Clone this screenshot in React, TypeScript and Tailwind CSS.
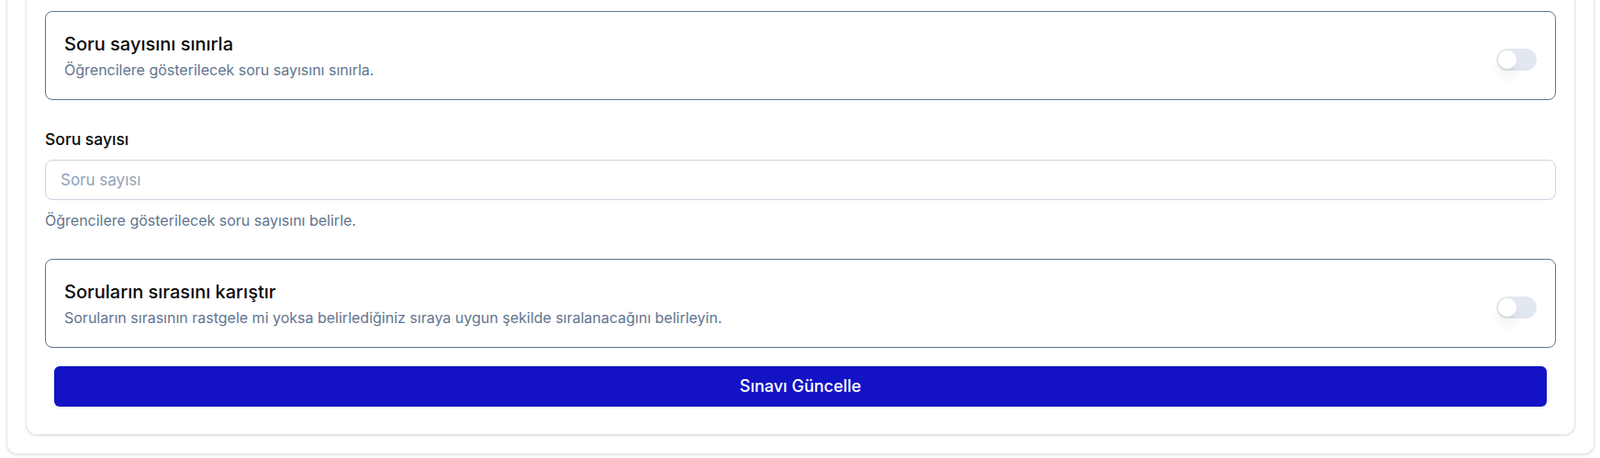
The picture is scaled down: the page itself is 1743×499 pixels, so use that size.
import React, { useState } from 'react';

function Toggle({ checked, onChange }: { checked: boolean; onChange: (v: boolean) => void }) {
  return (
    <button
      type="button"
      role="switch"
      aria-checked={checked}
      onClick={() => onChange(!checked)}
      className={`mt-2 inline-flex h-6 w-11 shrink-0 items-center rounded-full border-2 border-transparent transition-colors ${
        checked ? 'bg-[#1313c5]' : 'bg-slate-200'
      }`}
    >
      <span
        className={`block h-5 w-5 rounded-full bg-white shadow-lg ring-0 transition-transform ${
          checked ? 'translate-x-5' : 'translate-x-0'
        }`}
      />
    </button>
  );
}

function SwitchCard({
  title,
  description,
  checked,
  onChange
}: {
  title: string;
  description: string;
  checked: boolean;
  onChange: (v: boolean) => void;
}) {
  return (
    <div className="flex items-center justify-between rounded-lg border border-slate-500 px-5 pt-[21px] pb-5">
      <div>
        <h3 className="text-xl leading-7 font-medium text-[#0a0a0a]">{title}</h3>
        <p className="mt-0.5 text-base leading-6 text-slate-500">{description}</p>
      </div>
      <Toggle checked={checked} onChange={onChange} />
    </div>
  );
}

export default function App() {
  const [limitQuestions, setLimitQuestions] = useState(false);
  const [shuffle, setShuffle] = useState(false);
  const [count, setCount] = useState('');

  return (
    <div className="min-h-screen bg-white pl-[7px] pr-[6px] pb-1 font-['Inter',sans-serif]">
      {/* Dış kart */}
      <div className="rounded-b-xl border border-t-0 border-slate-200 px-5 pb-5 shadow-sm">
        {/* İç kart */}
        <div className="rounded-b-xl border border-t-0 border-slate-200 px-5 pt-3 pb-5 shadow-sm">
          <SwitchCard
            title="Soru sayısını sınırla"
            description="Öğrencilere gösterilecek soru sayısını sınırla."
            checked={limitQuestions}
            onChange={setLimitQuestions}
          />

          {/* Soru sayısı */}
          <div className="mt-[31px]">
            <label className="block text-[17.5px] leading-6 font-medium text-[#0a0a0a]">Soru sayısı</label>
            <input
              type="number"
              value={count}
              onChange={(e) => setCount(e.target.value)}
              placeholder="Soru sayısı"
              className="mt-2.5 h-11 w-full rounded-lg border border-slate-300 bg-white px-4 text-[17px] text-[#0a0a0a] placeholder:text-slate-400 focus:outline-none"
            />
            <p className="mt-2.5 text-base leading-6 text-slate-500">
              Öğrencilere gösterilecek soru sayısını belirle.
            </p>
          </div>

          <div className="mt-[30px]">
            <SwitchCard
              title="Soruların sırasını karıştır"
              description="Soruların sırasının rastgele mi yoksa belirlediğiniz sıraya uygun şekilde sıralanacağını belirleyin."
              checked={shuffle}
              onChange={setShuffle}
            />
          </div>

          <div className="px-2.5 pt-5 pb-2.5">
            <button
              type="submit"
              className="h-11 w-full rounded-md bg-[#1313c5] text-lg font-medium text-white shadow-sm"
            >
              Sınavı Güncelle
            </button>
          </div>
        </div>
      </div>
    </div>
  );
}
